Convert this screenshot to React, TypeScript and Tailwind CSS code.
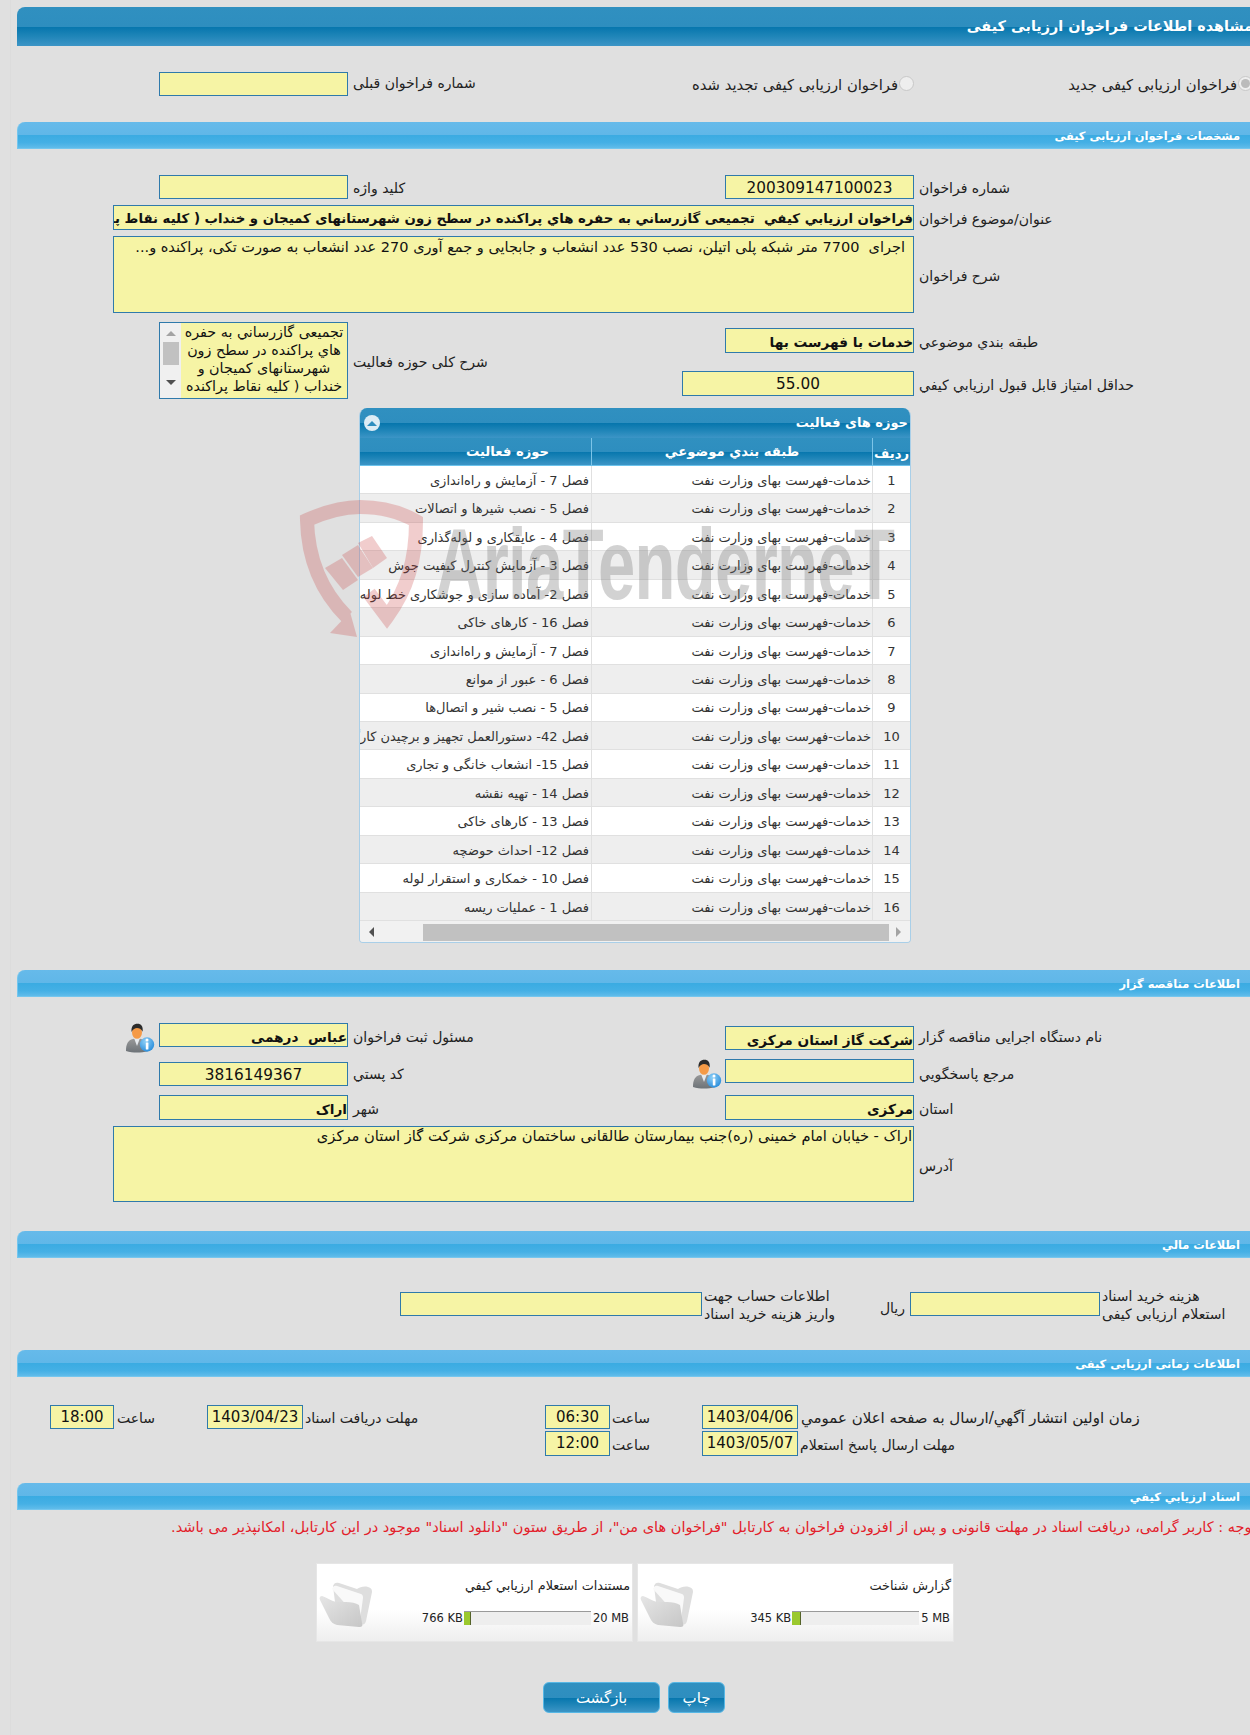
import React from "react";

const FONT = "font-['DejaVu_Sans','Noto_Sans',sans-serif]";
const MAIN_GRAD = "bg-[linear-gradient(to_bottom,#3090c0_0%,#2e8ebf_50%,#0676ad_51%,#1f85b8_75%,#3c95c6_100%)]";
const LIGHT_GRAD = "bg-[linear-gradient(to_bottom,#66baea_0%,#60b7e8_49%,#3aabe2_50%,#45b0e5_80%,#60bcea_100%)]";
const ROW_GRID = "grid grid-cols-[142px_189px_377px_189px_1fr]";

type FieldProps = { children?: React.ReactNode; className?: string };

function Field({ children, className = "" }: FieldProps) {
  return (
    <div
      dir="rtl"
      className={`bg-[#f6f4a5] border border-[#2f7aab] overflow-hidden whitespace-pre text-[#111] ${className}`}
    >
      {children}
    </div>
  );
}

function Label({ children, className = "" }: FieldProps) {
  return (
    <div dir="rtl" className={`text-[14px] leading-[18px] pt-[2px] text-left text-[#222] whitespace-nowrap ${className}`}>
      {children}
    </div>
  );
}

function Band({ title, className = "" }: { title: string; className?: string }) {
  return (
    <div
      dir="rtl"
      className={`h-[27px] rounded-tl-lg ${LIGHT_GRAD} border-l border-b border-[#74c6ee] flex items-center pr-[10px] pt-[3px] text-white text-[11.4px] font-bold ${className}`}
    >
      {title}
    </div>
  );
}

function Person() {
  return (
    <svg width="30" height="30" viewBox="0 0 30 30">
      <defs>
        <linearGradient id="suit" x1="0" y1="0" x2="0" y2="1">
          <stop offset="0" stopColor="#9a9a9a" />
          <stop offset="1" stopColor="#6d7378" />
        </linearGradient>
        <radialGradient id="info" cx="0.4" cy="0.3" r="0.8">
          <stop offset="0" stopColor="#8fd0f7" />
          <stop offset="1" stopColor="#1f86d8" />
        </radialGradient>
      </defs>
      <path d="M1 28c0-7 2-11 7-12l4-1 4 1c5 1 7 5 7 12-7 2-15 2-22 0z" fill="url(#suit)" />
      <path d="M9 15l3 8 3-8-3-1z" fill="#e6eaee" />
      <ellipse cx="12" cy="9.5" rx="5" ry="6.3" fill="#f59a46" />
      <path d="M6.6 9C5.8 3 9 .8 12.5.8 16 .8 18.4 3.2 17.6 8.8 16.4 5.8 14 5 12 5S8 6 6.6 9z" fill="#2b2b2b" />
      <circle cx="22" cy="21.5" r="7.2" fill="url(#info)" />
      <rect x="20.8" y="19.6" width="2.6" height="7" rx=".5" fill="#fff" />
      <circle cx="22" cy="17" r="1.5" fill="#fff" />
    </svg>
  );
}

function Folder() {
  return (
    <svg width="54" height="48" viewBox="0 0 54 48">
      <defs>
        <linearGradient id="fold" x1="0" y1="0" x2="1" y2="1">
          <stop offset="0" stopColor="#e6e6e6" />
          <stop offset="1" stopColor="#c6c6c6" />
        </linearGradient>
      </defs>
      <path d="M14 6c1-3 3-4 6-3l18 6c3-2 7-3 11-2 3 1 4 2 4 5l-6 29c-1 3-2 4-5 3L16 22z" fill="#dedede" />
      <path d="M13 9c1-3 3-4 5-3l24 8c2 1 2 2 2 4l-3 22z" fill="#f9f9f9" />
      <path d="M3 16c-2 0-3 2-2 4l9 18c2 4 4 6 8 7l22 2c3 0 4-1 3-4L40 25c-3-2-8-3-13-3l-10 0C12 21 7 17 3 16z" fill="url(#fold)" />
    </svg>
  );
}

function Watermark() {
  return (
    <div className="absolute left-[295px] top-[495px] w-[610px] h-[150px] pointer-events-none" dir="ltr">
      <svg width="140" height="150" viewBox="0 0 140 150" className="absolute left-0 top-0 opacity-25">
        <path
          d="M52 122C30 100 13 70 12 25 30 17 48 12 65 12c20 0 40 5 56 14 0 39-9 69-29 96L74 98"
          fill="none"
          stroke="#c83c3c"
          strokeWidth="14"
        />
        <polygon points="35,138 62,142 55,117" fill="#c83c3c" />
        <polygon points="30,73 47,63 63,85 48,95" fill="#c83c3c" />
        <polygon points="47,60 63,50 78,73 63,82" fill="#c83c3c" />
        <polygon points="63,48 77,41 92,63 78,73" fill="#c83c3c" />
      </svg>
      <div className="absolute left-[140px] top-[14px] origin-left scale-x-[0.67] font-['Liberation_Sans',sans-serif] font-bold text-[100px] leading-[110px] text-[#6e6e6e] opacity-30 whitespace-nowrap tracking-[-1px]">
        AriaTenderneT
      </div>
    </div>
  );
}

const rows: string[] = [
  "فصل 7 - آزمایش و راه‌اندازی",
  "فصل 5 - نصب شیرها و اتصالات",
  "فصل 4 - عایقکاری و لوله‌گذاری",
  "فصل 3 - آزمایش کنترل کیفیت جوش",
  "فصل 2- آماده سازی و جوشکاری خط لوله",
  "فصل 16 - کارهای خاکی",
  "فصل 7 - آزمایش و راه‌اندازی",
  "فصل 6 - عبور از موانع",
  "فصل 5 - نصب شیر و اتصال‌ها",
  "فصل 42- دستورالعمل تجهیز و برچیدن کارگاه",
  "فصل 15- انشعاب خانگی و تجاری",
  "فصل 14 - تهیه نقشه",
  "فصل 13 - کارهای خاکی",
  "فصل 12- احداث حوضچه",
  "فصل 10 - خمکاری و استقرار لوله",
  "فصل 1 - عملیات ریسه",
];

function ActivityGrid() {
  return (
    <div dir="rtl" className="ml-[342px] w-[552px] h-[535px] border border-[#a9cfe8] border-t-0 rounded-t-lg rounded-b-sm overflow-hidden">
      <div className={`h-[30px] ${MAIN_GRAD} flex items-center justify-between pr-[2px] pl-[4px] text-white text-[13px] font-bold`}>
        <span>حوزه های فعالیت</span>
        <span className="w-[16px] h-[16px] rounded-full bg-[#dcecf5] flex items-center justify-center">
          <span className="w-0 h-0 border-x-[5px] border-x-transparent border-b-[5px] border-b-[#2e8ebf]" />
        </span>
      </div>
      <div className={`h-[28px] flex text-white text-[13.2px] font-bold border-b border-[#6cc3ec] ${MAIN_GRAD}`}>
        <div className="w-[38px] border-l border-[#7cc4e8] flex items-center justify-center pt-[4px]">ردیف</div>
        <div className="w-[281px] border-l border-[#7cc4e8] flex items-center justify-center">طبقه بندي موضوعي</div>
        <div className="flex-1 flex items-center justify-center pl-[64px]">حوزه فعالیت</div>
      </div>
      {rows.map((r, i) => (
        <div
          key={i}
          className={`h-[28.44px] flex text-[13px] text-[#333] border-b border-[#e0e0e0] ${i % 2 === 0 ? "bg-white" : "bg-[#eeeeee]"}`}
        >
          <div className="w-[38px] border-l border-[#e0e0e0] flex items-center justify-center pt-[2px]">{i + 1}</div>
          <div className="w-[281px] border-l border-[#e0e0e0] flex items-center pr-[1px] pt-[2px] whitespace-nowrap">خدمات-فهرست بهای وزارت نفت</div>
          <div className="flex-1 flex items-center pr-[2px] pt-[2px] whitespace-nowrap overflow-hidden">{r}</div>
        </div>
      ))}
      <div dir="ltr" className="h-[22px] bg-[#f1f1f1] flex items-center">
        <span className="ml-[9px] w-0 h-0 border-y-[5px] border-y-transparent border-r-[5px] border-r-[#505050]" />
        <span className="ml-[49px] w-[466px] h-[17px] bg-[#c1c1c1]" />
        <span className="ml-[7px] w-0 h-0 border-y-[5px] border-y-transparent border-l-[5px] border-l-[#a3a3a3]" />
      </div>
    </div>
  );
}

function DocCard({ title, left, right, fill }: { title: string; left: string; right: string; fill: string }) {
  return (
    <div
      dir="ltr"
      className="w-[317px] h-[79px] border border-[#e6e6e6] bg-[linear-gradient(to_bottom,#ffffff_0%,#ffffff_60%,#eeeeee_100%)] flex"
    >
      <div className="w-[60px] pl-[2px] pt-[16px]">
        <Folder />
      </div>
      <div className="flex-1 flex flex-col items-end pr-[2px]">
        <div dir="rtl" className="mt-[14px] text-[12.8px] leading-[16px] text-[#222] whitespace-nowrap">{title}</div>
        <div className="mt-[17px] flex items-start text-[11.5px] leading-[15px] text-[#222] whitespace-nowrap">
          <span className="mr-[1px]">{left}</span>
          <span className="w-[127px] h-[14px] bg-[#eeeeee] border-t border-[#9a9a9a] flex">
            <span className={`${fill} h-full bg-[#9bc92e] border-r border-[#55632a]`} />
          </span>
          <span className="ml-[2px] mr-[1px]">{right}</span>
        </div>
      </div>
    </div>
  );
}

export default function App() {
  const inputTxt = "text-[15.3px] leading-[22px] pt-[1px]";
  const boldTxt = "text-[13.7px] leading-[22px] pt-[2px] font-bold";
  return (
    <div className={`relative w-[1250px] h-[1735px] overflow-hidden bg-[#e0e0e0] ${FONT}`}>
      <div dir="ltr" className="ml-[10px] w-[1240px] h-[1735px] border-l border-[#dcdcdc] pl-[6px] pt-[7px]">
        {/* title bar */}
        <div
          dir="rtl"
          className={`h-[39px] rounded-tl-lg ${MAIN_GRAD} flex items-center text-white text-[14.4px] font-bold whitespace-nowrap overflow-hidden`}
        >
          <span className="-mr-[3px]">مشاهده اطلاعات فراخوان ارزیابی کیفی</span>
        </div>

        {/* radios */}
        <div className={`mt-[26px] h-[24px] ${ROW_GRID}`}>
          <div />
          <Field />
          <Label className="pl-[5px]">شماره فراخوان قبلی</Label>
          <div className="flex items-center justify-end">
            <div dir="rtl" className="flex items-center gap-[1px] whitespace-nowrap text-[14.8px] text-[#222] pt-[2px]">
              <span className="w-[15px] h-[15px] mb-[4px] rounded-full bg-[#eeeeee] border border-[#c8c8c8]" />
              <span>فراخوان ارزیابی کیفی تجدید شده</span>
            </div>
          </div>
          <div className="flex items-center justify-end -mr-[3px]">
            <div dir="rtl" className="flex items-center gap-[1px] whitespace-nowrap text-[14.8px] text-[#222] pt-[2px]">
              <span className="w-[15px] h-[15px] mb-[4px] rounded-full bg-[#eeeeee] border border-[#c8c8c8] flex items-center justify-center">
                <span className="w-[9px] h-[9px] rounded-full bg-[#bbbbbb]" />
              </span>
              <span>فراخوان ارزیابی کیفی جدید</span>
            </div>
          </div>
        </div>

        <Band title="مشخصات فراخوان ارزیابی کیفی" className="mt-[26px]" />

        <div className={`mt-[26px] h-[24px] ${ROW_GRID} items-center`}>
          <div />
          <Field className="h-[24px]" />
          <Label className="pl-[5px]">کلید واژه</Label>
          <Field className={`h-[24px] text-center ${inputTxt}`}>200309147100023</Field>
          <Label className="pl-[5px]">شماره فراخوان</Label>
        </div>

        <div className="mt-[6px] h-[25px] flex items-center">
          <div className="ml-[96px]" />
          <Field className="w-[801px] h-[25px] font-bold text-[13.3px] leading-[22px] pt-[2px]">
            فراخوان ارزيابي كيفي  تجميعی گازرساني به حفره هاي پراكنده در سطح زون شهرستانهای کمیجان و خنداب ( کلیه نقاط پراکنده )
          </Field>
          <Label className="pl-[5px]">عنوان/موضوع فراخوان</Label>
        </div>

        <div className="mt-[6px] h-[77px] flex items-center">
          <div className="ml-[96px]" />
          <Field className="w-[801px] h-[77px] pr-[8px] text-[14.5px] leading-[18px] pt-[1px]">
            اجرای  7700 متر شبکه پلی اتیلن، نصب 530 عدد انشعاب و جابجایی و جمع آوری 270 عدد انشعاب به صورت تکی، پراکنده و...
          </Field>
          <Label className="pl-[5px]">شرح فراخوان</Label>
        </div>

        <div className={`mt-[9px] h-[77px] ${ROW_GRID}`}>
          <div />
          <div dir="ltr" className="w-[189px] h-[77px] border border-[#2f7aab] flex overflow-hidden">
            <div className="w-[21px] shrink-0 bg-[#f0f0f0] flex flex-col items-center pt-[8px]">
              <span className="w-0 h-0 border-x-[5px] border-x-transparent border-b-[5px] border-b-[#a3a3a3]" />
              <span className="mt-[6px] w-[16px] h-[23px] bg-[#c1c1c1]" />
              <span className="mt-[15px] w-0 h-0 border-x-[5px] border-x-transparent border-t-[5px] border-t-[#505050]" />
            </div>
            <div dir="rtl" className="flex-1 bg-[#f6f4a5] text-[14.3px] leading-[18px] text-center text-[#111] overflow-hidden">
              تجميعی گازرساني به حفره هاي پراكنده در سطح زون شهرستانهای کمیجان و خنداب ( کلیه نقاط پراکنده )
            </div>
          </div>
          <div className="flex items-center">
            <Label className="pl-[5px]">شرح کلی حوزه فعالیت</Label>
          </div>
          <div className="col-span-2 flex flex-col">
            <div className="mt-[6px] h-[25px] grid grid-cols-[189px_1fr] items-center">
              <Field className={`h-[25px] ${boldTxt}`}>خدمات با فهرست بها</Field>
              <Label className="pl-[5px]">طبقه بندي موضوعي</Label>
            </div>
            <div className="mt-[18px] h-[25px] grid grid-cols-[189px_1fr] items-center">
              <Field className={`h-[25px] w-[232px] justify-self-end text-center ${inputTxt}`}>55.00</Field>
              <Label className="pl-[5px] text-[14.6px]">حداقل امتياز قابل قبول ارزيابي کيفي</Label>
            </div>
          </div>
        </div>

        <div className="mt-[9px]">
          <ActivityGrid />
        </div>

        <Band title="اطلاعات مناقصه گزار" className="mt-[27px]" />

        <div className={`mt-[26px] h-[27px] ${ROW_GRID}`}>
          <div className="flex justify-end pr-[4px]"><Person /></div>
          <Field className={`h-[24px] ${boldTxt}`}>عباس  درهمی</Field>
          <Label className="pl-[5px] pt-[5px]">مسئول ثبت فراخوان</Label>
          <Field className={`h-[24px] mt-[3px] ${boldTxt}`}>شرکت گاز استان مرکزی</Field>
          <Label className="pl-[5px] pt-[5px]">نام دستگاه اجرایی مناقصه گزار</Label>
        </div>

        <div className={`mt-[9px] h-[27px] ${ROW_GRID}`}>
          <div />
          <Field className={`h-[24px] mt-[3px] text-center ${inputTxt}`}>3816149367</Field>
          <div className="flex justify-between pl-[5px] pt-[4px] pr-[3px]">
            <Label>کد پستي</Label>
            <div className="-mt-[4px] h-[30px]"><Person /></div>
          </div>
          <Field className="h-[24px]" />
          <Label className="pl-[5px] pt-[6px]">مرجع پاسخگويي</Label>
        </div>

        <div className={`mt-[9px] h-[25px] ${ROW_GRID} items-center`}>
          <div />
          <Field className={`h-[25px] ${boldTxt}`}>اراک</Field>
          <Label className="pl-[5px]">شهر</Label>
          <Field className={`h-[25px] ${boldTxt}`}>مرکزی</Field>
          <Label className="pl-[5px]">استان</Label>
        </div>

        <div className="mt-[6px] h-[76px] flex items-center">
          <div className="ml-[96px]" />
          <Field className="w-[801px] h-[76px] pr-[1px] text-[14.7px] leading-[18px]">
            اراک - خیابان امام خمینی (ره)جنب بیمارستان طالقانی ساختمان مرکزی شرکت گاز استان مرکزی
          </Field>
          <Label className="pl-[5px] pt-[4px]">آدرس</Label>
        </div>

        <Band title="اطلاعات مالي" className="mt-[29px]" />

        <div className="mt-[34px] h-[24px] flex items-center">
          <div className="ml-[383px]" />
          <Field className="w-[302px] h-[24px]" />
          <div className="w-[208px] flex justify-between items-center">
            <Label className="pl-[2px] text-[14.4px]">
              اطلاعات حساب جهت
              <br />
              واریز هزینه خرید اسناد
            </Label>
            <Label className="pr-[5px] pt-[8px] text-[13px]">ریال</Label>
          </div>
          <Field className="w-[190px] h-[24px]" />
          <Label className="pl-[2px] text-[14.4px]">
            هزینه خرید اسناد
            <br />
            استعلام ارزیابی کیفی
          </Label>
        </div>

        <Band title="اطلاعات زمانی ارزیابی کیفی" className="mt-[34px]" />

        <div className="mt-[28px] h-[24px] flex items-center">
          <div className="ml-[33px]" />
          <Field className="w-[64px] h-[24px] text-center text-[15px] leading-[22px]">18:00</Field>
          <Label className="w-[93px] pl-[3px]">ساعت</Label>
          <Field className="w-[96px] h-[24px] text-center text-[15px] leading-[22px]">1403/04/23</Field>
          <Label className="w-[242px] pl-[2px]">مهلت دریافت اسناد</Label>
          <Field className="w-[65px] h-[24px] text-center text-[15px] leading-[22px]">06:30</Field>
          <Label className="w-[92px] pl-[2px]">ساعت</Label>
          <Field className="w-[96px] h-[24px] text-center text-[15px] leading-[22px]">1403/04/06</Field>
          <Label className="pl-[3px] text-[15px]">زمان اولين انتشار آگهي/ارسال به صفحه اعلان عمومي</Label>
        </div>
        <div className="mt-[2px] h-[25px] flex items-center">
          <div className="ml-[528px]" />
          <Field className="w-[65px] h-[25px] text-center text-[15px] leading-[23px]">12:00</Field>
          <Label className="w-[92px] pl-[2px]">ساعت</Label>
          <Field className="w-[96px] h-[25px] text-center text-[15px] leading-[23px]">1403/05/07</Field>
          <Label className="pl-[2px] text-[14.6px]">مهلت ارسال پاسخ استعلام</Label>
        </div>

        <Band title="اسناد ارزیابي کیفي" className="mt-[27px]" />

        <div dir="rtl" className="mt-[7px] h-[20px] -mr-[6px] text-[14.5px] leading-[20px] text-[#e3202a] whitespace-nowrap">
          توجه : کاربر گرامی، دریافت اسناد در مهلت قانونی و پس از افزودن فراخوان به کارتابل "فراخوان های من"، از طریق ستون "دانلود اسناد" موجود در این کارتابل، امکانپذیر می باشد.
        </div>

        <div className="mt-[26px] ml-[299px] flex gap-[4px]">
          <DocCard title="مستندات استعلام ارزيابي كيفي" left="766 KB" right="20 MB" fill="w-[7px]" />
          <DocCard title="گزارش شناخت" left="345 KB" right="5 MB" fill="w-[9px]" />
        </div>

        <div className="mt-[40px] ml-[526px] flex gap-[8px] text-white text-[15px]">
          <button className={`w-[117px] h-[31px] pt-[2px] rounded-md border border-[#56b7e5] ${MAIN_GRAD}`}>بازگشت</button>
          <button className={`w-[57px] h-[31px] pt-[2px] rounded-md border border-[#56b7e5] ${MAIN_GRAD}`}>چاپ</button>
        </div>
      </div>
      <Watermark />
    </div>
  );
}
